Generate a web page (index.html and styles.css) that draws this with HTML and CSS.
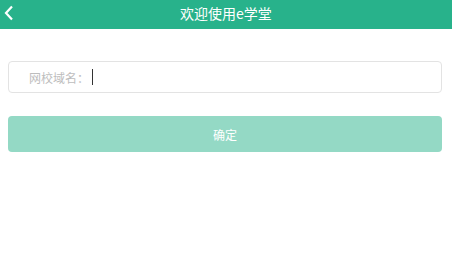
FILE: index.html
```html
<!DOCTYPE html>
<html lang="zh">
<head>
    <meta charset="UTF-8">
    <meta name="viewport" content="width=device-width, initial-scale=1.0">
    <title>欢迎使用e学堂</title>
    <link rel="stylesheet" href="styles.css">
</head>
<body>
    <div class="header">
        <span class="back">
            <svg width="10" height="16" viewBox="0 0 10 16"><path d="M8 1.5 L2 8 L8 14.5" fill="none" stroke="#fff" stroke-width="2.2"/></svg>
        </span>
        <h1 class="title">欢迎使用e学堂</h1>
    </div>
    <div class="content">
        <label class="field">
            <span class="label">网校域名：</span>
            <span class="caret"></span>
        </label>
        <button class="submit">确定</button>
    </div>
</body>
</html>
```

FILE: styles.css
```css
/* page */
body{
  margin: 0;
  background: #fff;
  font-family: "Noto Sans CJK SC", "Noto Sans", sans-serif;
}
/* header */
.header{
  height: 29px;
  background-color: #28b28b;
  display: flex;
  align-items: center;
  justify-content: center;
  position: relative;
}
.back{
  position: absolute;
  left: 4px;
  top: 5px;
  display: flex;
}
.title{
  margin: 0;
  color: #fff;
  font-size: 14px;
  font-weight: normal;
  line-height: 1;
  margin-top: -4px;
}
/* form */
.content{
  padding: 32px 10px 0 8px;
  display: flex;
  flex-direction: column;
}
.field{
  height: 30px;
  border: 1px solid #e3e3e3;
  border-radius: 4px;
  display: flex;
  align-items: center;
  padding-left: 20px;
}
.label{
  color: #bdbdbd;
  font-size: 12px;
}
.caret{
  width: 1px;
  height: 16px;
  background: #333;
  margin-left: 3px;
}
.submit{
  margin-top: 23px;
  height: 36px;
  border: none;
  border-radius: 4px;
  background-color: #94d9c5;
  color: #fff;
  font-size: 12px;
  font-family: inherit;
}
```
